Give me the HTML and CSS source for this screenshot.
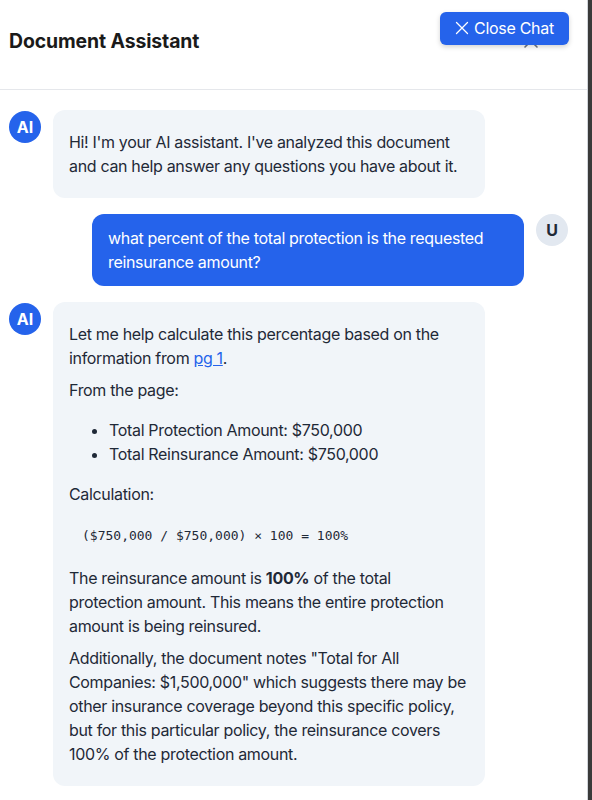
FILE: index.html
```html
<!DOCTYPE html>
<html lang="en">
<head>
<meta charset="utf-8">
<title>Document Assistant</title>
<link rel="stylesheet" href="styles.css">
</head>
<body>
<div class="panel">
  <header class="header">
    <h1 class="title">Document Assistant</h1>
    <span class="hidden-x">
      <svg width="20" height="20" viewBox="0 0 20 20" fill="none" stroke="#6b7280" stroke-width="1.6" stroke-linecap="round"><path d="M4 4l12 12M16 4L4 16"/></svg>
    </span>
    <button class="close-btn">
      <svg width="14" height="14" viewBox="0 0 14 14" fill="none" stroke="#ffffff" stroke-width="1.3" stroke-linecap="round"><path d="M1.5 1.5l11 11M12.5 1.5l-11 11"/></svg>
      <span>Close Chat</span>
    </button>
  </header>
  <main class="messages">
    <div class="msg ai">
      <div class="avatar ai-avatar">AI</div>
      <div class="bubble ai-bubble">
        <p>Hi! I'm your AI assistant. I've analyzed this document and can help answer any questions you have about it.</p>
      </div>
    </div>
    <div class="msg user">
      <div class="bubble user-bubble">what percent of the total protection is the requested reinsurance amount?</div>
      <div class="avatar user-avatar">U</div>
    </div>
    <div class="msg ai">
      <div class="avatar ai-avatar">AI</div>
      <div class="bubble ai-bubble">
        <p>Let me help calculate this percentage based on the information from <a class="link" href="#">pg 1</a>.</p>
        <p>From the page:</p>
        <ul>
          <li>Total Protection Amount: $750,000</li>
          <li>Total Reinsurance Amount: $750,000</li>
        </ul>
        <p>Calculation:</p>
        <pre class="code">($750,000 / $750,000) × 100 = 100%</pre>
        <p>The reinsurance amount is <strong>100%</strong> of the total protection amount. This means the entire protection amount is being reinsured.</p>
        <p>Additionally, the document notes "Total for All Companies: $1,500,000" which suggests there may be other insurance coverage beyond this specific policy, but for this particular policy, the reinsurance covers 100% of the protection amount.</p>
      </div>
    </div>
  </main>
</div>
</body>
</html>
```
FILE: styles.css
```css
* { box-sizing: border-box; }
html, body { margin: 0; padding: 0; }
body {
  width: 592px;
  height: 800px;
  background: #3a3a3a;
  font-family: Inter, "Noto Sans", sans-serif;
  color: #1f2937;
  overflow: hidden;
}
.panel {
  width: 588px;
  height: 800px;
  background: #ffffff;
  border-right: 1px solid #d1d5db;
}
.header {
  position: relative;
  height: 90px;
  border-bottom: 1px solid #e5e7eb;
  display: flex;
  align-items: center;
  justify-content: space-between;
  padding: 0 46px 8px 9px;
}
.title {
  margin: 0;
  font-size: 19.4px;
  font-weight: 700;
  color: #1a1a1a;
  line-height: 24px;
  letter-spacing: -0.1px;
}
.hidden-x {
  display: flex;
}
.close-btn {
  position: absolute;
  top: 12px;
  left: 440px;
  width: 129px;
  height: 33px;
  border: none;
  border-radius: 6px;
  background: #2563eb;
  color: #ffffff;
  font-family: Inter, "Noto Sans", sans-serif;
  font-size: 16px;
  letter-spacing: -0.3px;
  display: flex;
  align-items: center;
  justify-content: center;
  gap: 5px;
  padding: 0 0 1px 0;
  box-shadow: 0 2px 5px rgba(0,0,0,0.18);
}
.messages {
  padding: 20px 19px 0 9px;
  display: flex;
  flex-direction: column;
  gap: 16px;
}
.msg {
  display: flex;
  align-items: flex-start;
  gap: 12px;
}
.msg.user { justify-content: flex-end; }
.avatar {
  width: 32px;
  height: 32px;
  flex: 0 0 32px;
  border-radius: 50%;
  display: flex;
  align-items: center;
  justify-content: center;
  font-size: 16px;
  font-weight: 700;
  margin-top: 1px;
}
.ai-avatar { background: #2563eb; color: #ffffff; }
.user-avatar { background: #e2e8f0; color: #1f2937; margin-top: 0; }
.bubble {
  max-width: 432px;
  border-radius: 12px;
  font-size: 16px;
  line-height: 24px;
  letter-spacing: -0.33px;
}
.ai-bubble {
  background: #f1f5f9;
  padding: 12px 18px 12px 16px;
  width: 432px;
}
.user-bubble {
  background: #2563eb;
  color: #ffffff;
  padding: 12px 16px;
  width: 432px;
}
.ai-bubble p { margin: 8px 0; }
.ai-bubble ul { margin: 16px 0; padding-left: 40px; }
.link { color: #2563eb; text-decoration: underline; }
.code {
  margin: 8px 0;
  padding: 12px 13px;
  font-family: "DejaVu Sans Mono", monospace;
  font-size: 13px;
  line-height: 20px;
  letter-spacing: 0;
  color: #1f2937;
}
strong { font-weight: 700; }
```
